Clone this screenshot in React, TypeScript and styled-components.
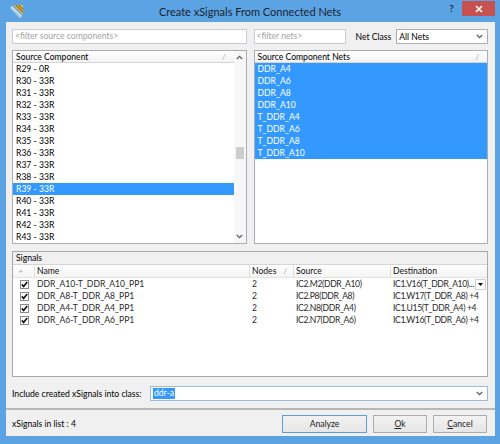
import React from "react";
import styled, { createGlobalStyle } from "styled-components";

const FONT = `"Lato", "Open Sans", "Liberation Sans", sans-serif`;

const GlobalStyle = createGlobalStyle`
  html, body { margin: 0; padding: 0; background: #5ba3e3; }
  body { font-family: ${FONT}; font-size: 8.6px; color: #000; }
  * { box-sizing: border-box; }
`;

const Window = styled.div`
  width: 500px;
  height: 444px;
  background: #5ba3e3;
  display: flex;
  flex-direction: column;
  overflow: hidden;
`;

const TitleBar = styled.div`
  height: 22px;
  flex: none;
  display: grid;
  grid-template-columns: 1fr auto 1fr;
  align-items: start;
`;

const TitleIcon = styled.div`
  padding: 4px 0 0 9px;
`;

const TitleText = styled.div`
  font-size: 11px;
  color: #1b2330;
  line-height: 22px;
  padding-top: 1px;
  white-space: nowrap;
`;

const Caption = styled.div`
  justify-self: end;
  display: flex;
  align-items: flex-start;
  padding: 1px 5px 0 0;
`;

const HelpBtn = styled.div`
  width: 21px;
  height: 15px;
  font-weight: bold;
  color: #1e2e44;
  font-size: 10px;
  text-align: center;
  line-height: 15px;
`;

const CloseBtn = styled.div`
  width: 33px;
  height: 15px;
  background: #c75050;
  display: flex;
  align-items: center;
  justify-content: center;
`;

const Client = styled.div`
  flex: 1;
  margin: 0 5px 8px 6px;
  background: #f0f0f0;
  display: flex;
  flex-direction: column;
  padding: 7px 0 3px;
  min-height: 0;
`;

const Body = styled.div`
  display: flex;
  flex-direction: column;
  padding: 0 7px 0 6px;
`;

const TwoCols = styled.div<{ $h: number; $mt?: number }>`
  display: grid;
  grid-template-columns: 1fr 1fr;
  column-gap: 7px;
  height: ${(p) => p.$h}px;
  margin-top: ${(p) => p.$mt ?? 0}px;
`;

const TextBox = styled.div<{ $w?: number }>`
  height: 15px;
  ${(p) => (p.$w ? `width: ${p.$w}px; flex: none;` : "")}
  border: 1px solid #c9ccd1;
  background: #fff;
  color: #a3a3a3;
  padding-left: 2px;
  line-height: 13px;
  white-space: nowrap;
  overflow: hidden;
`;

const FilterGroup = styled.div`
  display: flex;
  align-items: center;
`;

const FieldLabel = styled.span`
  margin: 0 5px 0 10px;
  white-space: nowrap;
`;

const Combo = styled.div<{ $focus?: boolean }>`
  flex: 1;
  height: 15px;
  border: 1px solid ${(p) => (p.$focus ? "#9dbbdc" : "#abadb3")};
  background: #fff;
  display: flex;
  align-items: center;
  padding: 0 4px 0 2px;
  justify-content: space-between;
`;

const ListBox = styled.div`
  border: 1px solid #abadb3;
  background: #fff;
  display: flex;
  min-height: 0;
  overflow: hidden;
`;

const ListMain = styled.div`
  flex: 1;
  display: flex;
  flex-direction: column;
  min-width: 0;
`;

const ListHeader = styled.div`
  height: 12px;
  flex: none;
  display: flex;
  align-items: center;
  justify-content: space-between;
  padding: 0 8px 0 3px;
  border-bottom: 1px solid #d5d5d5;
  background: linear-gradient(#ffffff, #f3f3f3);
  white-space: nowrap;
`;

const SortGlyph = styled.span`
  color: #a8a8a8;
  font-size: 8px;
`;

const ListRow = styled.div<{ $sel?: boolean }>`
  height: 12px;
  flex: none;
  line-height: 12px;
  padding-left: 3px;
  background: ${(p) => (p.$sel ? "#3399ff" : "transparent")};
  color: ${(p) => (p.$sel ? "#fff" : "#000")};
  white-space: nowrap;
`;

const ScrollBar = styled.div`
  width: 12px;
  flex: none;
  background: #f7f7f7;
  display: flex;
  flex-direction: column;
`;

const ScrollArrow = styled.div`
  height: 13px;
  flex: none;
  display: flex;
  align-items: center;
  justify-content: center;
`;

const ScrollTrack = styled.div`
  flex: 1;
  display: flex;
  flex-direction: column;
`;

const Thumb = styled.div<{ $top: number }>`
  margin: ${(p) => p.$top}px 2px 0 2px;
  height: 12px;
  background: #cdcdcd;
`;

const Panel = styled.div`
  margin-top: 7px;
  height: 126px;
  border: 1px solid #a9a9a9;
  background: #fff;
  display: flex;
  flex-direction: column;
`;

const PanelTitle = styled.div`
  height: 13px;
  flex: none;
  background: #f0f0f0;
  padding-left: 3px;
  line-height: 12px;
  border-bottom: 1px solid #d5d5d5;
`;

const COLS = "21px 215px 44px 97px 1fr";

const GridHeader = styled.div`
  height: 13px;
  flex: none;
  display: grid;
  grid-template-columns: ${COLS};
  background: linear-gradient(#ffffff, #f4f4f4);
  border-bottom: 1px solid #e3e3e3;
`;

const HeadCell = styled.div<{ $center?: boolean }>`
  border-left: 1px solid #e0e0e0;
  padding-left: ${(p) => (p.$center ? 0 : 2)}px;
  padding-right: 6px;
  line-height: 12px;
  display: flex;
  justify-content: ${(p) => (p.$center ? "center" : "space-between")};
  white-space: nowrap;
  color: #111;
  &:first-child { border-left: none; }
`;

const GridRow = styled.div`
  height: 12px;
  flex: none;
  display: grid;
  grid-template-columns: ${COLS};
  color: #2a2a2a;
`;

const Cell = styled.div<{ $tight?: boolean }>`
  padding-left: 3px;
  line-height: 12px;
  white-space: nowrap;
  overflow: hidden;
  display: flex;
  align-items: center;
  justify-content: space-between;
  letter-spacing: ${(p) => (p.$tight ? "-0.35px" : "0")};
`;

const CheckCell = styled.div`
  display: flex;
  align-items: center;
  justify-content: center;
  padding-left: 1px;
`;

const CheckBox = styled.div`
  width: 9px;
  height: 9px;
  border: 1px solid #8a8a8a;
  background: #fff;
  display: flex;
  align-items: center;
  justify-content: center;
`;

const DropBtn = styled.div`
  width: 11px;
  height: 11px;
  border: 1px solid #d0d0d0;
  background: #fff;
  display: flex;
  align-items: center;
  justify-content: center;
  margin-right: 1px;
  flex: none;
`;

const IncludeRow = styled.div`
  margin-top: 9px;
  height: 15px;
  display: grid;
  grid-template-columns: 138px 1fr;
  align-items: center;
`;

const SelText = styled.span`
  background: #3399ff;
  color: #fff;
  padding: 0 1px;
  line-height: 11px;
`;

const Separator = styled.div`
  margin-top: 7px;
  height: 2px;
  background: #b7b7b7;
  flex: none;
`;

const Footer = styled.div`
  display: flex;
  align-items: center;
  justify-content: space-between;
  padding: 5px 8px 0 6px;
`;

const Buttons = styled.div`
  display: flex;
  gap: 6px;
`;

const Button = styled.div<{ $w: number; $default?: boolean }>`
  width: ${(p) => p.$w}px;
  height: 18px;
  border: 1px solid ${(p) => (p.$default ? "#5d9fd6" : "#adadad")};
  background: linear-gradient(#f2f2f2, #e6e6e6);
  display: flex;
  align-items: center;
  justify-content: center;
  color: #222;
`;

const Chevron = ({ up }: { up?: boolean }) => (
  <svg width="7" height="5" viewBox="0 0 7 5">
    <polyline
      points={up ? "0.8,4 3.5,1.3 6.2,4" : "0.8,1 3.5,3.7 6.2,1"}
      fill="none"
      stroke="#606060"
      strokeWidth="1.3"
    />
  </svg>
);

const Check = () => (
  <svg width="7" height="7" viewBox="0 0 7 7">
    <polyline points="0.8,3.4 2.6,5.4 6.2,1" fill="none" stroke="#111" strokeWidth="1.6" />
  </svg>
);

const AppIcon = () => (
  <svg width="15" height="15" viewBox="0 0 15 15">
    <path d="M4 1 L14 1 L14 11 Z" fill="#e5b93a" />
    <path d="M6 1 L7.5 1 L14 7.5 L14 9 Z" fill="#8a6a1c" />
    <path d="M9 1 L10.5 1 L14 4.5 L14 6 Z" fill="#8a6a1c" />
    <path d="M1 4 L3 2 L13 12 L11 14 Z" fill="#dfe9f5" />
    <path d="M1 4 L2 3 L12 13 L11 14 Z" fill="#9fbedf" />
  </svg>
);

const leftRows = [
  "R29 - 0R", "R30 - 33R", "R31 - 33R", "R32 - 33R", "R33 - 33R",
  "R34 - 33R", "R35 - 33R", "R36 - 33R", "R37 - 33R", "R38 - 33R",
  "R39 - 33R", "R40 - 33R", "R41 - 33R", "R42 - 33R", "R43 - 33R",
];

const rightRows = [
  "DDR_A4", "DDR_A6", "DDR_A8", "DDR_A10",
  "T_DDR_A4", "T_DDR_A6", "T_DDR_A8", "T_DDR_A10",
];

const signals = [
  { name: "DDR_A10-T_DDR_A10_PP1", nodes: "2", src: "IC2.M2(DDR_A10)", dst: "IC1.V16(T_DDR_A10)...", drop: true },
  { name: "DDR_A8-T_DDR_A8_PP1", nodes: "2", src: "IC2.P8(DDR_A8)", dst: "IC1.W17(T_DDR_A8) +4" },
  { name: "DDR_A4-T_DDR_A4_PP1", nodes: "2", src: "IC2.N8(DDR_A4)", dst: "IC1.U15(T_DDR_A4) +4" },
  { name: "DDR_A6-T_DDR_A6_PP1", nodes: "2", src: "IC2.N7(DDR_A6)", dst: "IC1.W16(T_DDR_A6) +4" },
];

export default function App() {
  return (
    <>
      <GlobalStyle />
      <Window>
        <TitleBar>
          <TitleIcon>
            <AppIcon />
          </TitleIcon>
          <TitleText>Create xSignals From Connected Nets</TitleText>
          <Caption>
            <HelpBtn>?</HelpBtn>
            <CloseBtn>
              <svg width="8" height="8" viewBox="0 0 8 8">
                <path d="M1 1 L7 7 M7 1 L1 7" stroke="#fff" strokeWidth="1.6" />
              </svg>
            </CloseBtn>
          </Caption>
        </TitleBar>
        <Client>
          <Body>
            <TwoCols $h={15}>
              <TextBox>&lt;filter source components&gt;</TextBox>
              <FilterGroup>
                <TextBox $w={92}>&lt;filter nets&gt;</TextBox>
                <FieldLabel>Net Class</FieldLabel>
                <Combo>
                  <span>All Nets</span>
                  <Chevron />
                </Combo>
              </FilterGroup>
            </TwoCols>
            <TwoCols $h={194} $mt={6}>
              <ListBox>
                <ListMain>
                  <ListHeader>
                    <span>Source Component</span>
                    <SortGlyph>/</SortGlyph>
                  </ListHeader>
                  {leftRows.map((r, i) => (
                    <ListRow key={r} $sel={i === 10}>
                      {r}
                    </ListRow>
                  ))}
                </ListMain>
                <ScrollBar>
                  <ScrollArrow>
                    <Chevron up />
                  </ScrollArrow>
                  <ScrollTrack>
                    <Thumb $top={83} />
                  </ScrollTrack>
                  <ScrollArrow>
                    <Chevron />
                  </ScrollArrow>
                </ScrollBar>
              </ListBox>
              <ListBox>
                <ListMain>
                  <ListHeader>
                    <span>Source Component Nets</span>
                    <SortGlyph>/</SortGlyph>
                  </ListHeader>
                  {rightRows.map((r) => (
                    <ListRow key={r} $sel>
                      {r}
                    </ListRow>
                  ))}
                </ListMain>
              </ListBox>
            </TwoCols>
            <Panel>
              <PanelTitle>Signals</PanelTitle>
              <GridHeader>
                <HeadCell $center>
                  <SortGlyph>+</SortGlyph>
                </HeadCell>
                <HeadCell>Name</HeadCell>
                <HeadCell>
                  <span>Nodes</span>
                  <SortGlyph>/</SortGlyph>
                </HeadCell>
                <HeadCell>Source</HeadCell>
                <HeadCell>Destination</HeadCell>
              </GridHeader>
              {signals.map((s) => (
                <GridRow key={s.name}>
                  <CheckCell>
                    <CheckBox>
                      <Check />
                    </CheckBox>
                  </CheckCell>
                  <Cell>{s.name}</Cell>
                  <Cell>{s.nodes}</Cell>
                  <Cell $tight>{s.src}</Cell>
                  <Cell $tight>
                    <span>{s.dst}</span>
                    {s.drop && (
                      <DropBtn>
                        <svg width="5" height="3" viewBox="0 0 5 3">
                          <path d="M0 0 L5 0 L2.5 3 Z" fill="#000" />
                        </svg>
                      </DropBtn>
                    )}
                  </Cell>
                </GridRow>
              ))}
            </Panel>
            <IncludeRow>
              <span>Include created xSignals into class:</span>
              <Combo $focus>
                <SelText>ddr-a</SelText>
                <Chevron />
              </Combo>
            </IncludeRow>
          </Body>
          <Separator />
          <Footer>
            <span>xSignals in list : 4</span>
            <Buttons>
              <Button $w={85} $default>Analyze</Button>
              <Button $w={54}>
                <span>
                  <u>O</u>k
                </span>
              </Button>
              <Button $w={54}>
                <span>
                  <u>C</u>ancel
                </span>
              </Button>
            </Buttons>
          </Footer>
        </Client>
      </Window>
    </>
  );
}
